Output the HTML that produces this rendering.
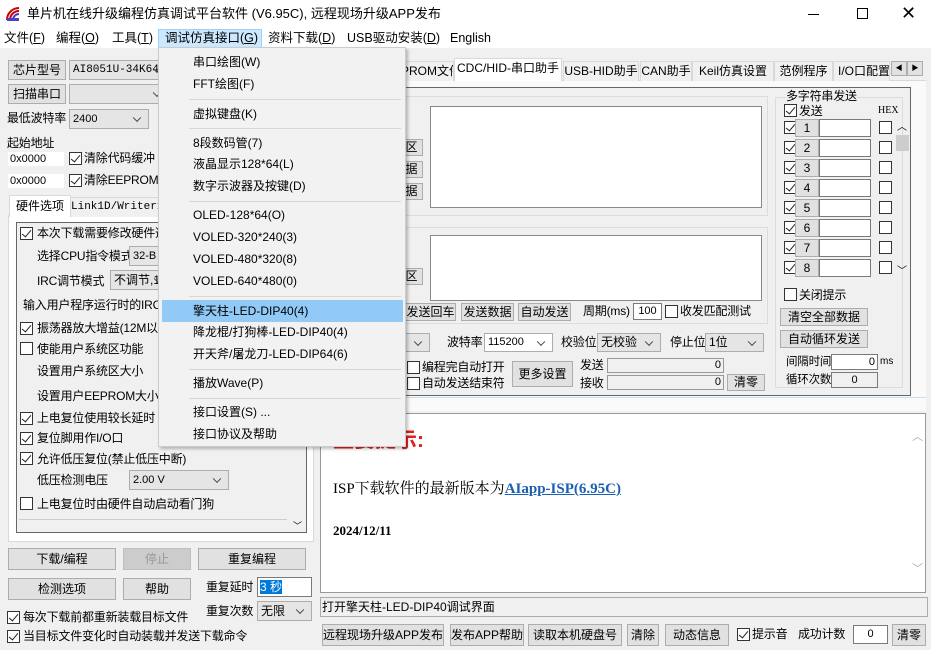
<!DOCTYPE html>
<html><head><meta charset="utf-8">
<style>
*{box-sizing:border-box;margin:0;padding:0}
body{width:931px;height:650px;overflow:hidden;background:#f0f0f0;position:relative;font-family:"Liberation Sans","Noto Sans CJK SC",sans-serif;font-size:12px;color:#000}
.a{position:absolute;white-space:nowrap}
.t{position:absolute;white-space:nowrap;line-height:16px;font-size:12px;letter-spacing:-0.2px}
.btn{position:absolute;background:#e1e1e1;border:1px solid #adadad;text-align:center;font-size:12px;white-space:nowrap;overflow:hidden}
.in{position:absolute;background:#fff;border:1px solid #7a7a7a;font-size:11px;white-space:nowrap;overflow:hidden;padding:0 2px}
.cmb{position:absolute;background:#e5e5e5;border:1px solid #adadad;font-size:12px;white-space:nowrap;overflow:hidden;padding:0 3px}
.cmb:after{content:"";position:absolute;right:8px;top:50%;width:5px;height:5px;border-right:1px solid #444;border-bottom:1px solid #444;transform:translateY(-70%) rotate(45deg)}
.cb{position:absolute;width:13px;height:13px;background:#fff;border:1px solid #333}
.cb.k:after{content:"";position:absolute;left:3px;top:0px;width:4px;height:8px;border-right:1.5px solid #222;border-bottom:1.5px solid #222;transform:rotate(40deg)}
.box{position:absolute;border:1px solid #adadad}
.menu{position:absolute;left:158px;top:47px;width:248px;height:400px;background:#f2f2f2;border:1px solid #ccc;box-shadow:2px 2px 3px rgba(0,0,0,.25);font-family:"Liberation Sans","Noto Sans CJK SC",sans-serif;font-size:12px}
.mi{position:absolute;left:34px;white-space:nowrap;line-height:16px}
.sep{position:absolute;left:30px;right:4px;height:1px;background:#d7d7d7}
.tab{position:absolute;top:61px;height:20px;border:1px solid #d9d9d9;border-bottom:none;background:#f0f0f0;font-size:12px;line-height:18px;text-align:center;white-space:nowrap;overflow:hidden}
</style></head><body>
<div class="a" style="left:0;top:0;width:931px;height:29px;background:#fff"></div>
<svg class="a" style="left:5px;top:6px" width="16" height="16" viewBox="0 0 16 16"><path d="M2 14 A12 12 0 0 1 14 2" stroke="#c00" stroke-width="2" fill="none"/><path d="M5 14 A9 9 0 0 1 14 5" stroke="#c00" stroke-width="2" fill="none"/><path d="M8 14 A6 6 0 0 1 14 8" stroke="#44c" stroke-width="2" fill="none"/><rect x="2" y="12" width="12" height="3" fill="#44c"/></svg>
<div class="a" style="left:27px;top:5px;font-size:13px;line-height:18px">单片机在线升级编程仿真调试平台软件 (V6.95C), 远程现场升级APP发布</div>
<div class="a" style="left:808px;top:14px;width:11px;height:1px;background:#000"></div>
<div class="a" style="left:857px;top:8px;width:11px;height:11px;border:1px solid #000"></div>
<div class="a" style="left:901px;top:3px;font-size:18px;line-height:20px">✕</div>
<div class="a" style="left:0;top:29px;width:931px;height:19px;background:#fff"></div>
<div class="a" style="left:158px;top:29px;width:104px;height:19px;background:#cce8ff;border:1px solid #99d1ff"></div>
<div class="a" style="left:4px;top:30px;font-size:12.5px;line-height:17px">文件(<u>F</u>)</div>
<div class="a" style="left:56px;top:30px;font-size:12.5px;line-height:17px">编程(<u>O</u>)</div>
<div class="a" style="left:112px;top:30px;font-size:12.5px;line-height:17px">工具(<u>T</u>)</div>
<div class="a" style="left:165px;top:30px;font-size:12.5px;line-height:17px">调试仿真接口(<u>G</u>)</div>
<div class="a" style="left:268px;top:30px;font-size:12.5px;line-height:17px">资料下载(<u>D</u>)</div>
<div class="a" style="left:347px;top:30px;font-size:12.5px;line-height:17px">USB驱动安装(<u>D</u>)</div>
<div class="a" style="left:450px;top:30px;font-size:12.5px;line-height:17px">English</div>

<div class="btn" style="left:8px;top:60px;width:58px;height:20px;line-height:18px">芯片型号</div>
<div class="cmb" style="left:69px;top:60px;width:100px;height:20px;line-height:18px;font-family:'Liberation Mono',monospace;font-size:11px">AI8051U-34K64</div>
<div class="btn" style="left:8px;top:84px;width:58px;height:20px;line-height:18px">扫描串口</div>
<div class="cmb" style="left:69px;top:84px;width:100px;height:20px"></div>
<div class="t" style="left:7px;top:110px">最低波特率</div>
<div class="cmb" style="left:69px;top:109px;width:80px;height:20px;line-height:18px;font-size:11px">2400</div>
<div class="t" style="left:7px;top:135px">起始地址</div>
<div class="in" style="left:7px;top:151px;width:58px;height:16px;line-height:14px;font-size:11px;border-color:#f0f0f0">0x0000</div>
<div class="cb k" style="left:69px;top:152px"></div><div class="t" style="left:84px;top:150px">清除代码缓冲</div>
<div class="in" style="left:7px;top:173px;width:58px;height:16px;line-height:14px;font-size:11px;border-color:#f0f0f0">0x0000</div>
<div class="cb k" style="left:69px;top:174px"></div><div class="t" style="left:84px;top:172px">清除EEPROM缓</div>
<div class="box" style="left:8px;top:215px;width:306px;height:327px;background:#fff;border-color:#d9d9d9"></div>
<div class="tab" style="left:9px;top:195px;width:62px;height:22px;background:#fff;line-height:20px">硬件选项</div>
<div class="tab" style="left:70px;top:197px;width:90px;font-size:11px;font-family:'Liberation Mono',monospace">Link1D/Writer1</div>
<div class="box" style="left:16px;top:222px;width:291px;height:311px;background:#f0f0f0;border-color:#666"></div>
<div class="cb k" style="left:20px;top:227px"></div><div class="t" style="left:37px;top:225px">本次下载需要修改硬件选项</div>
<div class="t" style="left:37px;top:248px">选择CPU指令模式</div><div class="cmb" style="left:129px;top:246px;width:50px;height:20px;font-size:11px;line-height:18px">32-B</div>
<div class="t" style="left:37px;top:273px">IRC调节模式</div><div class="cmb" style="left:110px;top:270px;width:60px;height:20px;line-height:18px">不调节,1</div>
<div class="t" style="left:23px;top:297px">输入用户程序运行时的IRC</div>
<div class="cb k" style="left:20px;top:322px"></div><div class="t" style="left:37px;top:320px">振荡器放大增益(12M以</div>
<div class="cb" style="left:20px;top:342px"></div><div class="t" style="left:37px;top:341px">使能用户系统区功能</div>
<div class="t" style="left:37px;top:363px">设置用户系统区大小</div>
<div class="t" style="left:37px;top:388px">设置用户EEPROM大小</div>
<div class="cb k" style="left:20px;top:412px"></div><div class="t" style="left:37px;top:410px">上电复位使用较长延时</div>
<div class="cb k" style="left:20px;top:432px"></div><div class="t" style="left:37px;top:430px">复位脚用作I/O口</div>
<div class="cb k" style="left:20px;top:452px"></div><div class="t" style="left:37px;top:451px">允许低压复位(禁止低压中断)</div>
<div class="t" style="left:37px;top:472px">低压检测电压</div><div class="cmb" style="left:129px;top:470px;width:100px;height:20px;line-height:18px;font-size:11px">2.00 V</div>
<div class="cb" style="left:20px;top:497px"></div><div class="t" style="left:37px;top:496px">上电复位时由硬件自动启动看门狗</div>
<div class="a" style="left:19px;top:519px;width:268px;height:1px;background:#ccc"></div>
<div class="a" style="left:293px;top:519px;font-size:9px">﹀</div>
<div class="btn" style="left:8px;top:548px;width:108px;height:22px;line-height:20px">下载/编程</div>
<div class="btn" style="left:123px;top:548px;width:68px;height:22px;line-height:20px;color:#999;background:#ccc;border-color:#bfbfbf">停止</div>
<div class="btn" style="left:198px;top:548px;width:108px;height:22px;line-height:20px">重复编程</div>
<div class="btn" style="left:8px;top:578px;width:108px;height:22px;line-height:20px">检测选项</div>
<div class="btn" style="left:123px;top:578px;width:68px;height:22px;line-height:20px">帮助</div>
<div class="t" style="left:206px;top:579px">重复延时</div>
<div class="in" style="left:257px;top:577px;width:55px;height:20px;line-height:18px;border-color:#7a7a7a;font-size:12px"><span style="background:#0078d7;color:#fff">3 秒</span></div>
<div class="t" style="left:206px;top:603px">重复次数</div>
<div class="cmb" style="left:257px;top:601px;width:55px;height:20px;line-height:18px">无限</div>
<div class="cb k" style="left:7px;top:611px"></div><div class="t" style="left:23px;top:609px">每次下载前都重新装载目标文件</div>
<div class="cb k" style="left:7px;top:630px"></div><div class="t" style="left:23px;top:628px">当目标文件变化时自动装载并发送下载命令</div>

<div class="a" style="left:320px;top:80px;width:606px;height:1px;background:#d9d9d9"></div>
<div class="tab" style="left:400px;width:54px">PROM文件</div>
<div class="tab" style="left:454px;top:58px;width:108px;height:23px;background:#fff">CDC/HID-串口助手</div>
<div class="tab" style="left:563px;width:76px">USB-HID助手</div>
<div class="tab" style="left:640px;width:52px">CAN助手</div>
<div class="tab" style="left:692px;width:82px">Keil仿真设置</div>
<div class="tab" style="left:774px;width:59px">范例程序</div>
<div class="tab" style="left:833px;width:57px;text-align:left;padding-left:4px">I/O口配置</div>
<div class="btn" style="left:891px;top:61px;width:16px;height:15px;font-size:7px;line-height:13px">◀</div>
<div class="btn" style="left:907px;top:61px;width:16px;height:15px;font-size:7px;line-height:13px">▶</div>
<div class="a" style="left:320px;top:81px;width:606px;height:330px;background:#fafafa"></div>
<div class="box" style="left:398px;top:87px;width:513px;height:309px;background:#f0f0f0;border-color:#666"></div>
<div class="box" style="left:398px;top:96px;width:370px;height:120px;border-color:#dcdcdc"></div>
<div class="in" style="left:430px;top:106px;width:332px;height:102px;border-color:#888"></div>
<div class="btn" style="left:400px;top:139px;width:23px;height:17px;line-height:15px">区</div>
<div class="btn" style="left:400px;top:161px;width:23px;height:17px;line-height:15px">据</div>
<div class="btn" style="left:400px;top:183px;width:23px;height:17px;line-height:15px">据</div>
<div class="box" style="left:398px;top:227px;width:370px;height:97px;border-color:#dcdcdc"></div>
<div class="in" style="left:430px;top:235px;width:332px;height:66px;border-color:#888"></div>
<div class="btn" style="left:400px;top:268px;width:23px;height:17px;line-height:15px">区</div>
<div class="btn" style="left:405px;top:303px;width:51px;height:18px;line-height:16px">发送回车</div>
<div class="btn" style="left:461px;top:303px;width:53px;height:18px;line-height:16px">发送数据</div>
<div class="btn" style="left:518px;top:303px;width:53px;height:18px;line-height:16px">自动发送</div>
<div class="t" style="left:583px;top:303px">周期(ms)</div>
<div class="in" style="left:633px;top:303px;width:29px;height:17px;line-height:15px;text-align:center">100</div>
<div class="cb" style="left:665px;top:305px"></div><div class="t" style="left:680px;top:303px">收发匹配测试</div>
<div class="cmb" style="left:405px;top:333px;width:25px;height:19px"></div>
<div class="t" style="left:447px;top:334px">波特率</div>
<div class="cmb" style="left:484px;top:333px;width:69px;height:19px;line-height:17px;background:#fff;font-size:11px">115200</div>
<div class="t" style="left:561px;top:334px">校验位</div>
<div class="cmb" style="left:597px;top:333px;width:64px;height:19px;line-height:17px">无校验</div>
<div class="t" style="left:670px;top:334px">停止位</div>
<div class="cmb" style="left:705px;top:333px;width:59px;height:19px;line-height:17px">1位</div>
<div class="cb" style="left:407px;top:361px"></div><div class="t" style="left:422px;top:359px">编程完自动打开</div>
<div class="cb" style="left:407px;top:377px"></div><div class="t" style="left:422px;top:375px">自动发送结束符</div>
<div class="btn" style="left:512px;top:361px;width:61px;height:26px;line-height:24px">更多设置</div>
<div class="t" style="left:580px;top:357px">发送</div>
<div class="in" style="left:607px;top:358px;width:117px;height:15px;line-height:13px;text-align:right;background:#f0f0f0;border-color:#999">0</div>
<div class="t" style="left:580px;top:375px">接收</div>
<div class="in" style="left:607px;top:375px;width:117px;height:15px;line-height:13px;text-align:right;background:#f0f0f0;border-color:#999">0</div>
<div class="btn" style="left:727px;top:374px;width:38px;height:17px;line-height:15px">清零</div>
<div class="box" style="left:775px;top:97px;width:128px;height:291px;border-color:#dcdcdc"></div>
<div class="t" style="left:786px;top:88px;background:#f0f0f0">多字符串发送</div>
<div class="cb k" style="left:784px;top:104px"></div><div class="t" style="left:799px;top:103px">发送</div>
<div class="a" style="left:878px;top:105px;font-size:10px;font-family:'Liberation Serif',serif">HEX</div>
<div class="cb k" style="left:784px;top:121px"></div><div class="btn" style="left:795px;top:119px;width:24px;height:18px;line-height:16px">1</div><div class="in" style="left:819px;top:119px;width:52px;height:18px"></div><div class="cb" style="left:879px;top:121px"></div>
<div class="cb k" style="left:784px;top:141px"></div><div class="btn" style="left:795px;top:139px;width:24px;height:18px;line-height:16px">2</div><div class="in" style="left:819px;top:139px;width:52px;height:18px"></div><div class="cb" style="left:879px;top:141px"></div>
<div class="cb k" style="left:784px;top:161px"></div><div class="btn" style="left:795px;top:159px;width:24px;height:18px;line-height:16px">3</div><div class="in" style="left:819px;top:159px;width:52px;height:18px"></div><div class="cb" style="left:879px;top:161px"></div>
<div class="cb k" style="left:784px;top:181px"></div><div class="btn" style="left:795px;top:179px;width:24px;height:18px;line-height:16px">4</div><div class="in" style="left:819px;top:179px;width:52px;height:18px"></div><div class="cb" style="left:879px;top:181px"></div>
<div class="cb k" style="left:784px;top:201px"></div><div class="btn" style="left:795px;top:199px;width:24px;height:18px;line-height:16px">5</div><div class="in" style="left:819px;top:199px;width:52px;height:18px"></div><div class="cb" style="left:879px;top:201px"></div>
<div class="cb k" style="left:784px;top:221px"></div><div class="btn" style="left:795px;top:219px;width:24px;height:18px;line-height:16px">6</div><div class="in" style="left:819px;top:219px;width:52px;height:18px"></div><div class="cb" style="left:879px;top:221px"></div>
<div class="cb k" style="left:784px;top:241px"></div><div class="btn" style="left:795px;top:239px;width:24px;height:18px;line-height:16px">7</div><div class="in" style="left:819px;top:239px;width:52px;height:18px"></div><div class="cb" style="left:879px;top:241px"></div>
<div class="cb k" style="left:784px;top:261px"></div><div class="btn" style="left:795px;top:259px;width:24px;height:18px;line-height:16px">8</div><div class="in" style="left:819px;top:259px;width:52px;height:18px"></div><div class="cb" style="left:879px;top:261px"></div>
<div class="a" style="left:896px;top:135px;width:13px;height:16px;background:#cdcdcd"></div>
<div class="a" style="left:897px;top:118px;font-size:10px">︿</div>
<div class="a" style="left:897px;top:262px;font-size:10px">﹀</div>
<div class="cb" style="left:784px;top:288px"></div><div class="t" style="left:799px;top:287px">关闭提示</div>
<div class="btn" style="left:780px;top:308px;width:88px;height:18px;line-height:16px">清空全部数据</div>
<div class="btn" style="left:780px;top:330px;width:88px;height:18px;line-height:16px">自动循环发送</div>
<div class="t" style="left:786px;top:354px;font-size:11.5px">间隔时间</div><div class="in" style="left:831px;top:354px;width:47px;height:16px;line-height:14px;text-align:right">0</div><div class="a" style="left:880px;top:356px;font-size:10px">ms</div>
<div class="t" style="left:786px;top:372px;font-size:11.5px">循环次数</div><div class="in" style="left:831px;top:372px;width:47px;height:16px;line-height:14px;text-align:center;background:#f0f0f0">0</div>

<div class="a" style="left:320px;top:397px;width:606px;height:1px;background:#cde"></div>
<div class="box" style="left:320px;top:413px;width:606px;height:180px;background:#fff;border-color:#999"></div>
<div class="a" style="left:333px;top:428px;font-size:21px;color:#e02020;font-weight:bold;line-height:26px">重要提示:</div>
<div class="a" style="left:333px;top:480px;font-size:15px;line-height:18px;font-family:'Liberation Serif','Noto Serif CJK SC',serif">ISP下载软件的最新版本为<span style="color:#1a5fb4;text-decoration:underline;font-weight:bold">AIapp-ISP(6.95C)</span></div>
<div class="a" style="left:333px;top:523px;font-size:13px;font-weight:bold;font-family:'Liberation Serif',serif">2024/12/11</div>
<div class="a" style="left:912px;top:428px;font-size:11px;color:#aaa">︿</div>
<div class="a" style="left:912px;top:560px;font-size:11px;color:#aaa">﹀</div>
<div class="in" style="left:320px;top:597px;width:608px;height:20px;line-height:18px;background:#f0f0f0;border-color:#aaa;padding-left:1px;font-size:12px">打开擎天柱-LED-DIP40调试界面</div>
<div class="btn" style="left:322px;top:624px;width:122px;height:22px;line-height:20px">远程现场升级APP发布</div>
<div class="btn" style="left:450px;top:624px;width:74px;height:22px;line-height:20px">发布APP帮助</div>
<div class="btn" style="left:528px;top:624px;width:94px;height:22px;line-height:20px">读取本机硬盘号</div>
<div class="btn" style="left:627px;top:624px;width:32px;height:22px;line-height:20px">清除</div>
<div class="btn" style="left:665px;top:624px;width:64px;height:22px;line-height:20px">动态信息</div>
<div class="cb k" style="left:737px;top:628px"></div><div class="t" style="left:752px;top:626px">提示音</div>
<div class="t" style="left:798px;top:626px">成功计数</div>
<div class="in" style="left:853px;top:625px;width:35px;height:19px;line-height:17px;text-align:center">0</div>
<div class="btn" style="left:892px;top:624px;width:34px;height:22px;line-height:20px">清零</div>

<div class="menu">
<div class="mi" style="top:6px">串口绘图(W)</div>
<div class="mi" style="top:28px">FFT绘图(F)</div>
<div class="sep" style="top:51px"></div>
<div class="mi" style="top:58px">虚拟键盘(K)</div>
<div class="sep" style="top:80px"></div>
<div class="mi" style="top:87px">8段数码管(7)</div>
<div class="mi" style="top:108px">液晶显示128*64(L)</div>
<div class="mi" style="top:130px">数字示波器及按键(D)</div>
<div class="sep" style="top:153px"></div>
<div class="mi" style="top:159px">OLED-128*64(O)</div>
<div class="mi" style="top:181px">VOLED-320*240(3)</div>
<div class="mi" style="top:203px">VOLED-480*320(8)</div>
<div class="mi" style="top:225px">VOLED-640*480(0)</div>
<div class="sep" style="top:248px"></div>
<div class="a" style="left:3px;top:252px;width:241px;height:22px;background:#91c9f7"></div>
<div class="mi" style="top:255px">擎天柱-LED-DIP40(4)</div>
<div class="mi" style="top:276px">降龙棍/打狗棒-LED-DIP40(4)</div>
<div class="mi" style="top:298px">开天斧/屠龙刀-LED-DIP64(6)</div>
<div class="sep" style="top:321px"></div>
<div class="mi" style="top:327px">播放Wave(P)</div>
<div class="sep" style="top:350px"></div>
<div class="mi" style="top:356px">接口设置(S) ...</div>
<div class="mi" style="top:378px">接口协议及帮助</div>
</div>
</body></html>
